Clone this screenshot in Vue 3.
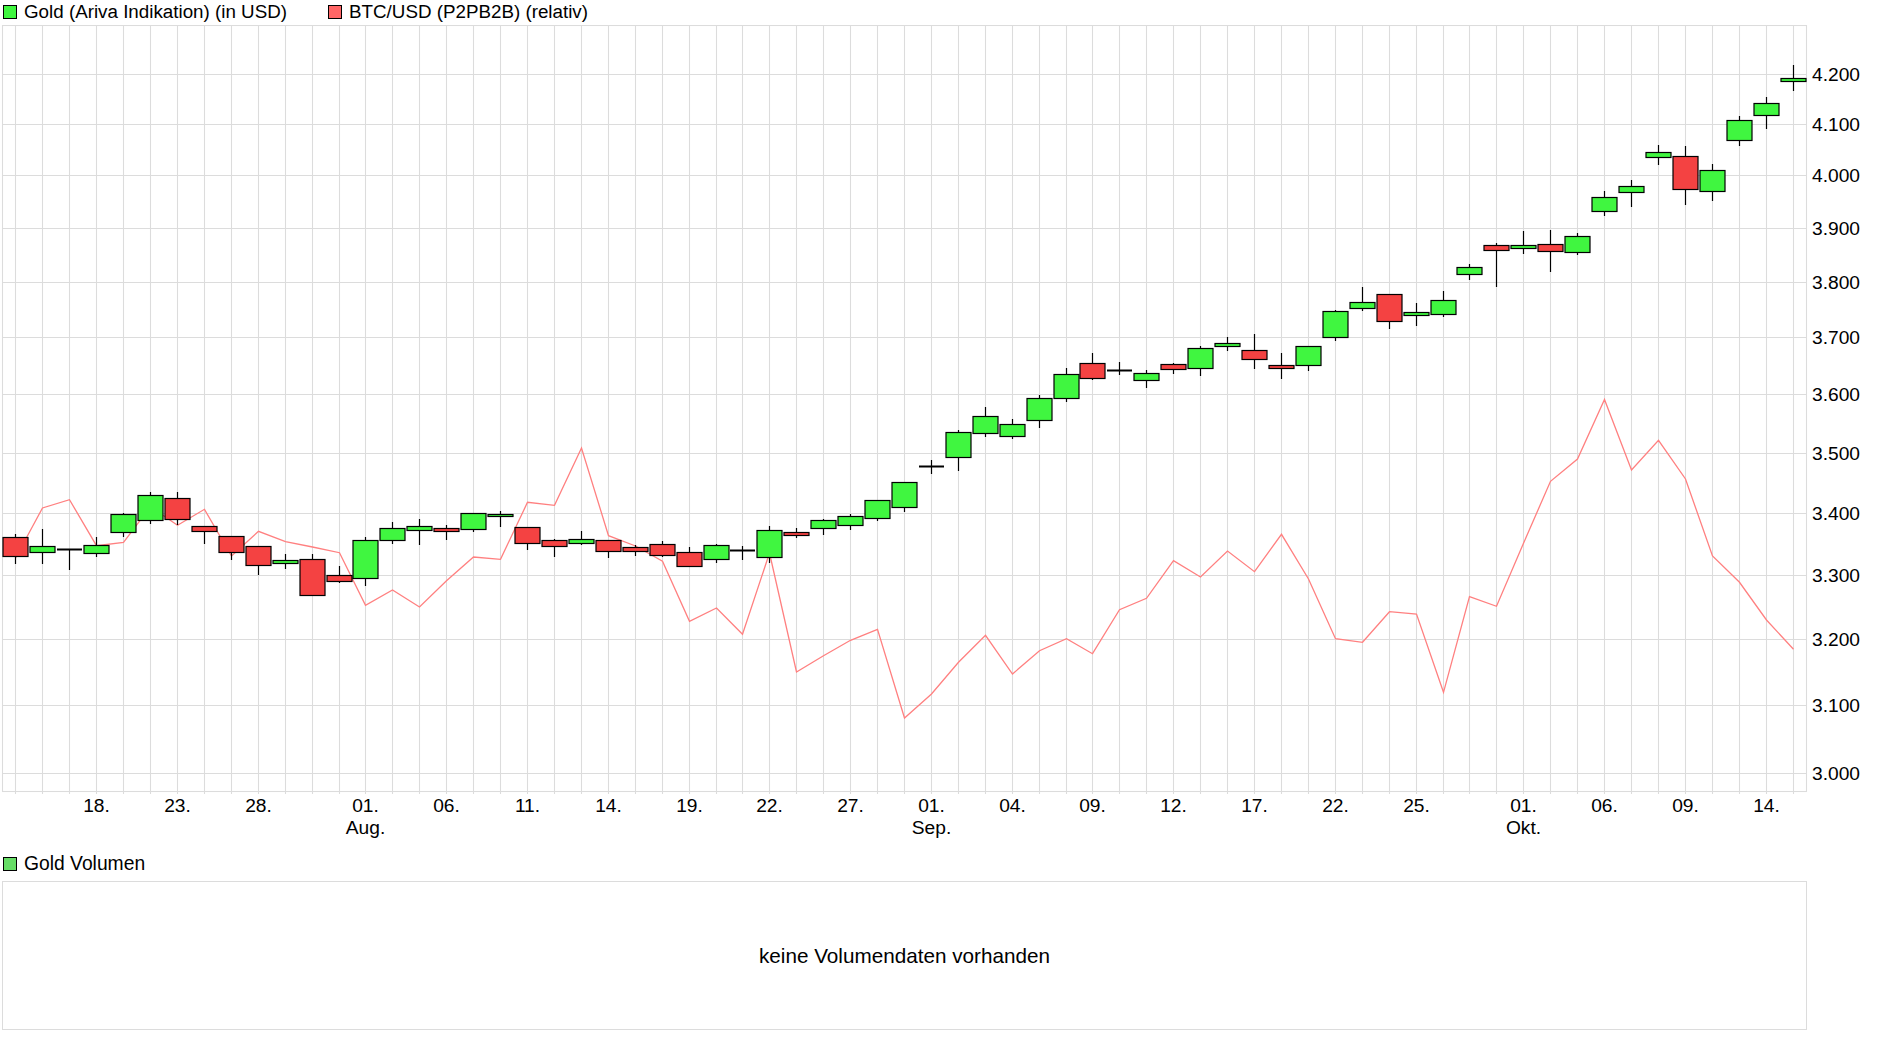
<script setup>
// pixel rows read off the chart: [up?, body top, body bottom, wick top, wick bottom]
const G = 1, R = 0, D = 2
const rows = [
  [R, 537, 556, 534, 564], [G, 546, 552, 529, 564], [D, 549, 549, 549, 570], [G, 545, 553, 537, 557],
  [G, 514, 532, 513, 537], [G, 495, 520, 492, 524], [R, 498, 519, 492, 525], [R, 526, 531, 526, 544],
  [R, 536, 552, 536, 560], [R, 546, 565, 546, 575], [G, 560, 563, 554, 569], [R, 559, 595, 554, 595],
  [R, 575, 581, 566, 583], [G, 540, 578, 537, 586], [G, 528, 540, 522, 544], [G, 526, 530, 519, 545],
  [R, 528, 531, 525, 540], [G, 513, 529, 513, 532], [G, 514, 516, 511, 527], [R, 527, 543, 527, 550],
  [R, 540, 546, 539, 557], [G, 539, 543, 531, 545], [R, 540, 551, 540, 558], [R, 547, 551, 545, 556],
  [R, 544, 555, 541, 557], [R, 552, 566, 547, 566], [G, 545, 559, 544, 563], [D, 550, 550, 546, 560],
  [G, 530, 557, 526, 563], [R, 532, 535, 528, 538], [G, 520, 528, 519, 535], [G, 516, 525, 514, 530],
  [G, 500, 518, 500, 521], [G, 482, 507, 482, 512], [D, 466, 466, 460, 474], [G, 432, 457, 430, 471],
  [G, 416, 433, 407, 437], [G, 424, 436, 419, 439], [G, 398, 420, 395, 428], [G, 374, 398, 368, 402],
  [R, 363, 378, 353, 380], [D, 370, 370, 362, 375], [G, 373, 380, 370, 388], [R, 364, 369, 363, 374],
  [G, 348, 368, 346, 376], [G, 343, 346, 337, 351], [R, 350, 359, 334, 369], [R, 365, 368, 353, 379],
  [G, 346, 365, 346, 371], [G, 311, 337, 310, 341], [G, 302, 308, 287, 311], [R, 294, 321, 294, 329],
  [G, 312, 315, 303, 326], [G, 300, 314, 291, 317], [G, 267, 274, 264, 280], [R, 245, 250, 243, 287],
  [G, 245, 248, 231, 254], [R, 244, 251, 230, 272], [G, 236, 252, 233, 255], [G, 197, 211, 191, 216],
  [G, 186, 192, 180, 207], [G, 152, 157, 145, 165], [R, 156, 189, 146, 205], [G, 170, 191, 164, 201],
  [G, 120, 140, 116, 146], [G, 103, 115, 97, 129], [G, 78, 81, 65, 91],
]

const btc = [
  558, 508, 499.7, 545.7, 542.3, 506.7, 525.3, 509.3, 556, 531.3, 541.7, 547, 552.7, 605.3, 590, 607, 580.7,
  557, 559.3, 502.3, 505.3, 448, 535.7, 546, 561.3, 621.3, 608, 634.3, 553, 672, 655.7, 640.3, 629.3, 718, 694,
  662.3, 635.3, 674, 650.7, 638.7, 653.7, 609.7, 598.3, 560.7, 577, 551, 571.7, 534.3, 579, 638.7, 642.3, 611.7,
  614, 692.3, 596.7, 606.3, 543.3, 481.3, 459, 399.5, 470, 440.3, 479, 556, 582.3, 620, 649.3,
]

// the source chart was scaled up, so every so often a step is 26px instead of 27
const xAt = (i) => 15 + 27 * i - [13, 27, 40, 54].filter((s) => s <= i).length

const candles = rows.map(([kind, top, bottom, wickTop, wickBottom], i) => ({
  kind, top, bottom, wickTop, wickBottom, x: xAt(i),
}))

const btcPoints = btc.map((y, i) => `${xAt(i) + 0.5},${y}`).join(" ")

const priceLines = [
  ["4.200", 74], ["4.100", 124], ["4.000", 175], ["3.900", 228], ["3.800", 282], ["3.700", 337], ["3.600", 394],
  ["3.500", 453], ["3.400", 513], ["3.300", 575], ["3.200", 639], ["3.100", 705], ["3.000", 773],
]

const dayLabels = [
  ["18.", 3], ["23.", 6], ["28.", 9], ["01.", 13], ["06.", 16], ["11.", 19], ["14.", 22], ["19.", 25], ["22.", 28],
  ["27.", 31], ["01.", 34], ["04.", 37], ["09.", 40], ["12.", 43], ["17.", 46], ["22.", 49], ["25.", 52],
  ["01.", 56], ["06.", 59], ["09.", 62], ["14.", 65],
]

const monthLabels = [["Aug.", 13], ["Sep.", 34], ["Okt.", 56]]

const colorOf = (kind) => (kind === G ? "#40f640" : "#f44242")
</script>

<template>
  <div class="page">
    <div class="legend legend-top">
      <div class="legend-item">
        <span class="swatch swatch-green"></span>
        <span>Gold (Ariva Indikation) (in USD)</span>
      </div>
      <div class="legend-item">
        <span class="swatch swatch-red"></span>
        <span>BTC/USD (P2PB2B) (relativ)</span>
      </div>
    </div>

    <svg class="chart" viewBox="0 25 1880 820" width="1880" height="820">
      <!-- grid -->
      <g class="grid">
        <line v-for="c in candles" :key="c.x" :x1="c.x + 0.5" :x2="c.x + 0.5" y1="25" y2="794" />
        <line v-for="p in priceLines" :key="p[0]" x1="2" x2="1807" :y1="p[1] + 0.5" :y2="p[1] + 0.5" />
        <rect x="2.5" y="25.5" width="1804" height="766" fill="none" />
      </g>

      <polyline class="btc-line" :points="btcPoints" />

      <!-- candles -->
      <g v-for="c in candles" :key="'c' + c.x">
        <line class="wick" :x1="c.x + 0.5" :x2="c.x + 0.5" :y1="c.wickTop" :y2="c.wickBottom" />
        <line
          v-if="c.kind === D"
          class="doji"
          :x1="c.x - 12"
          :x2="c.x + 13"
          :y1="c.top + 0.5"
          :y2="c.top + 0.5"
        />
        <rect
          v-else
          class="body"
          :x="c.x - 12"
          :y="c.top + 0.5"
          width="25"
          :height="c.bottom - c.top"
          :fill="colorOf(c.kind)"
        />
      </g>

      <!-- axis labels -->
      <text v-for="p in priceLines" :key="'p' + p[0]" class="label" x="1812" :y="p[1] + 6.5">{{ p[0] }}</text>
      <text
        v-for="d in dayLabels"
        :key="d[1]"
        class="label mid"
        :x="xAt(d[1]) + 0.5"
        y="811.5"
      >{{ d[0] }}</text>
      <text
        v-for="m in monthLabels"
        :key="m[0]"
        class="label mid"
        :x="xAt(m[1]) + 0.5"
        y="834"
      >{{ m[0] }}</text>
    </svg>

    <div class="legend legend-volume">
      <div class="legend-item">
        <span class="swatch swatch-volume"></span>
        <span>Gold Volumen</span>
      </div>
    </div>

    <div class="volume-box">keine Volumendaten vorhanden</div>
  </div>
</template>

<style scoped>
.page {
  width: 1880px;
  height: 1049px;
  background: #fff;
  color: #000;
  font-family: "Liberation Sans", Arial, sans-serif;
  font-size: 19.2px;
  overflow: hidden;
}

.legend {
  display: flex;
  align-items: center;
  gap: 41px;
  padding-left: 3px;
  box-sizing: border-box;
}

.legend-top {
  height: 25px;
  padding-bottom: 2px;
  font-size: 18.8px;
}

.legend-volume {
  height: 36px;
  padding-top: 2px;
  font-size: 19.3px;
}

.legend-item {
  display: flex;
  align-items: center;
  gap: 7px;
  line-height: 22px;
}

.swatch {
  width: 14px;
  height: 14px;
  box-sizing: border-box;
  border: 1px solid #000;
}

.swatch-green {
  background: #40f640;
}

.swatch-red {
  background: #ff6666;
}

.swatch-volume {
  background: #66dd66;
}

.chart {
  display: block;
}

.grid line,
.grid rect {
  stroke: #dcdcdc;
  stroke-width: 1.1;
}

.btc-line {
  fill: none;
  stroke: #ff8080;
  stroke-width: 1.3;
}

.wick {
  stroke: #000;
  stroke-width: 1.2;
}

.doji {
  stroke: #000;
  stroke-width: 2;
}

.body {
  stroke: #000;
  stroke-width: 1.2;
}

.label {
  font-size: 19.2px;
  fill: #000;
}

.mid {
  text-anchor: middle;
}

.volume-box {
  margin-left: 2px;
  width: 1803px;
  height: 147px;
  border: 1px solid #dcdcdc;
  display: flex;
  align-items: center;
  justify-content: center;
  font-size: 20.7px;
}
</style>
